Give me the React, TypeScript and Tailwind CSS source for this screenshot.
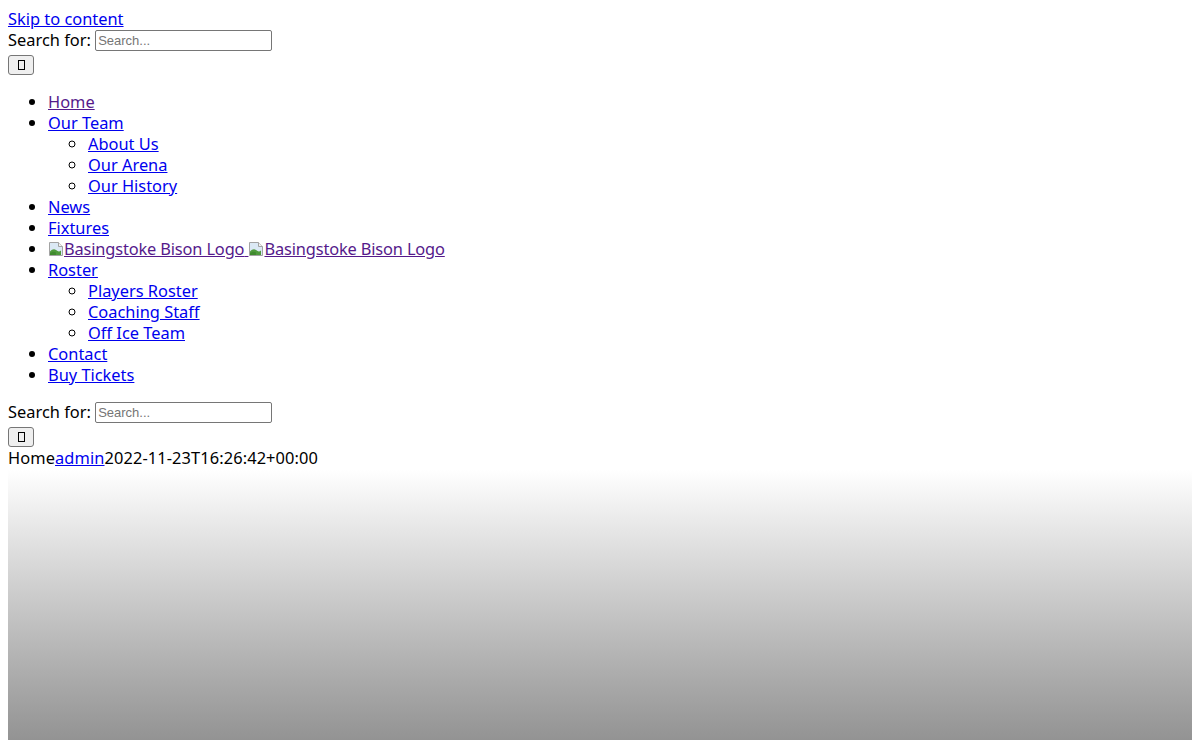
import React from "react";

const BrokenImg = () => (
  <svg width="16" height="16" viewBox="0 0 16 16" className="inline-block align-[-2px]" aria-hidden="true">
    <path d="M1.5 1.5h9l4 4v9h-13z" fill="#dbe9f5" stroke="#a3a3a3" />
    <path d="M10.5 1.5v4h4" fill="#f2f2f2" stroke="#a3a3a3" />
    <path d="M2 14V10.5c2-2 4-3 6-1.5s3 2 5 0.5V14z" fill="#4f9a3c" />
    <path d="M2 12.5c2-2 4-2.5 6-1v2.5H2z" fill="#3f8a2e" />
  </svg>
);

const Tofu = () => (
  <span className="inline-block w-[7px] h-[10px] border border-black" />
);

const SearchForm = () => (
  <div>
    <div>
      <label className="text-black">
        Search for:{" "}
        <input
          type="text"
          placeholder="Search..."
          className="w-[177px] h-[21px] border border-[#767676] rounded-[2px] px-[2px] py-[1px] text-[13px] align-[1px] placeholder:text-[#757575] bg-white"
          style={{ fontFamily: '"Liberation Sans", Arial, sans-serif' }}
        />
      </label>
    </div>
    <div className="pt-[4px] h-[24px]">
      <button className="w-[26px] h-[20px] border border-[#767676] rounded-[3px] bg-[#efefef] flex items-center justify-center">
        <Tofu />
      </button>
    </div>
  </div>
);

const A = ({ children, visited }: { children: React.ReactNode; visited?: boolean }) => (
  <a href="#" className={`underline ${visited ? "text-[#551a8b]" : "text-[#0000ee]"}`}>
    {children}
  </a>
);

export default function App() {
  return (
    <div
      className="px-[8px] pt-[8px] pb-[8px] text-[16.4px] leading-[21px] text-black bg-white min-h-[740px]"
      style={{ fontFamily: '"Noto Sans", "Open Sans", sans-serif' }}
    >
      <div>
        <A>Skip to content</A>
      </div>
      <SearchForm />
      <ul className="list-disc pl-[40px] my-[16px]">
        <li>
          <A visited>Home</A>
        </li>
        <li>
          <A>Our Team</A>
          <ul className="list-[circle] pl-[40px]">
            <li><A>About Us</A></li>
            <li><A>Our Arena</A></li>
            <li><A>Our History</A></li>
          </ul>
        </li>
        <li><A>News</A></li>
        <li><A>Fixtures</A></li>
        <li className="tracking-[-0.15px]">
          <a href="#" className="underline text-[#551a8b]">
            <BrokenImg />Basingstoke Bison Logo{" "}
          </a>{" "}
          <a href="#" className="underline text-[#551a8b]">
            <BrokenImg />Basingstoke Bison Logo
          </a>
        </li>
        <li>
          <A>Roster</A>
          <ul className="list-[circle] pl-[40px]">
            <li><A>Players Roster</A></li>
            <li><A>Coaching Staff</A></li>
            <li><A>Off Ice Team</A></li>
          </ul>
        </li>
        <li><A>Contact</A></li>
        <li><A>Buy Tickets</A></li>
      </ul>
      <SearchForm />
      <div className="h-[23px] tracking-[0.1px]">
        Home<A>admin</A>2022-11-23T16:26:42+00:00
      </div>
      <div className="h-[270px] bg-gradient-to-b from-[#ffffff] to-[#939393]" />
    </div>
  );
}
